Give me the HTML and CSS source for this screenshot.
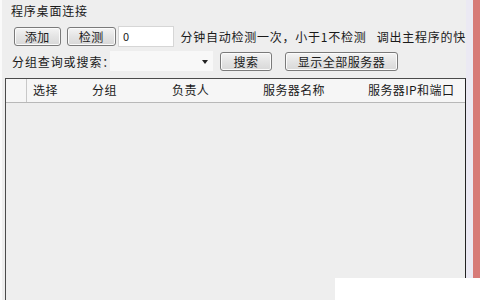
FILE: index.html
```html
<!DOCTYPE html>
<html lang="zh">
<head>
<meta charset="utf-8">
<link rel="stylesheet" href="styles.css">
</head>
<body>
<div class="window">
  <div class="main">
    <div class="title">程序桌面连接</div>
    <div class="row row1">
      <button class="btn btn-add">添加</button>
      <button class="btn btn-check">检测</button>
      <div class="input">0</div>
      <span class="hint">分钟自动检测一次，小于1不检测&nbsp;&nbsp;&nbsp;调出主程序的快</span>
    </div>
    <div class="row row2">
      <span class="label">分组查询或搜索：</span>
      <div class="combo"><span class="arrow"></span></div>
      <button class="btn btn-search">搜索</button>
      <button class="btn btn-all">显示全部服务器</button>
    </div>
    <div class="list">
      <div class="header">
        <div class="col col0"></div>
        <div class="col">选择</div>
        <div class="col">分组</div>
        <div class="col">负责人</div>
        <div class="col">服务器名称</div>
        <div class="col">服务器IP和端口</div>
      </div>
      <div class="body"></div>
    </div>
  </div>
  <div class="stripe"></div>
  <div class="red"></div>
  <div class="mark"></div>
</div>
</body>
</html>
```

FILE: styles.css
```css
html, body {
  margin: 0;
  padding: 0;
}
body {
  width: 480px;
  height: 300px;
  overflow: hidden;
  background: #eeeeee;
  font-family: "Noto Sans CJK SC", "Noto Sans", sans-serif;
  font-size: 12px;
  color: #1a1a1a;
}
.window {
  display: flex;
  height: 300px;
  position: relative;
}
.main {
  width: 466px;
  display: flex;
  flex-direction: column;
  border-left: 2px solid #fafafa;
  box-sizing: border-box;
}
.stripe {
  width: 7px;
  background: #ebe9f3;
}
.red {
  width: 7px;
  background: #d77a78;
}
.title {
  margin-top: 3px;
  height: 16px;
  line-height: 16px;
  padding-left: 9px;
  letter-spacing: 0.8px;
}
.row {
  display: flex;
  align-items: center;
  height: 22px;
}
.row1 {
  margin-top: 6px;
  padding-left: 12px;
}
.row2 {
  margin-top: 3px;
  padding-left: 10px;
}
.btn {
  font-family: inherit;
  font-size: 12px;
  color: #1a1a1a;
  height: 19px;
  padding: 0;
  line-height: 17px;
  letter-spacing: 0.5px;
  border: 1px solid #7a7a7a;
  border-radius: 3px;
  background: linear-gradient(#f4f4f4, #e4e4e4 50%, #d8d8d8);
  box-shadow: inset 0 0 0 1px #fbfbfb;
}
.btn-add { width: 47px; }
.btn-check { width: 50px; margin-left: 6px; }
.input {
  margin-left: 2px;
  width: 56px;
  height: 21px;
  box-sizing: border-box;
  background: #ffffff;
  border: 1px solid #d6d6d6;
  padding-left: 4px;
  line-height: 19px;
  font-size: 11px;
}
.hint {
  margin-left: 7px;
  white-space: nowrap;
  letter-spacing: 0.75px;
}
.label {
  width: 98px;
  white-space: nowrap;
  letter-spacing: 0.9px;
}
.combo {
  width: 103px;
  height: 20px;
  background: #f8f8f8;
  position: relative;
}
.arrow {
  position: absolute;
  right: 5px;
  top: 9px;
  border-left: 3px solid transparent;
  border-right: 3px solid transparent;
  border-top: 4px solid #222;
}
.btn-search { width: 52px; margin-left: 7px; }
.btn-all { width: 113px; margin-left: 13px; }
.list {
  margin-top: 6px;
  margin-left: 3px;
  flex: 1;
  border: 1px solid #4a4a4a;
  border-bottom: none;
  border-right-color: #222;
  background: #eeeeee;
  display: flex;
  flex-direction: column;
}
.header {
  display: grid;
  grid-template-columns: 21px 59px 80px 91px 105px 1fr;
  height: 23px;
  background: #f6f6f6;
  border-bottom: 1px solid #b8b8b8;
}
.col {
  line-height: 22px;
  padding-left: 6px;
  white-space: nowrap;
  letter-spacing: 0.4px;
}
.col0 {
  border-right: 1px solid #c8c8c8;
  padding-left: 0;
}
.body {
  flex: 1;
}
.mark {
  position: absolute;
  z-index: 10;
  left: 335px;
  right: 0;
  bottom: 0;
  height: 22px;
  background: #ffffff;
}
```
